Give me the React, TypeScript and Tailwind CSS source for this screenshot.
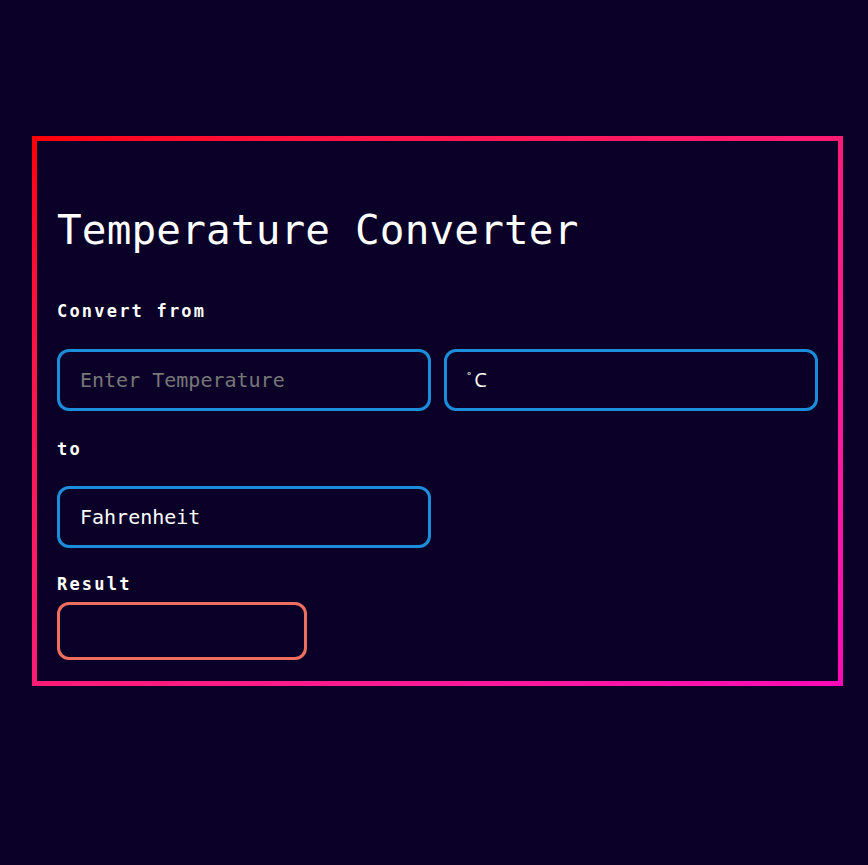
export default function App() {
  const box = "flex h-[62px] items-center rounded-[12px] border-[3px] border-[#1b8ddb] px-[20px] text-[20px]";
  const label = "block text-[17px] font-bold leading-none tracking-[2.2px]";

  return (
    <div className="min-h-screen bg-[#0b0128] pl-[32px] pt-[136px] font-['DejaVu_Sans_Mono',monospace] text-white">
      <div className="w-[811px] bg-linear-to-br from-[#ff0000] to-[#ff08b8] p-[5px]">
        <div className="bg-[#0b0128] px-[20px] pb-[21px] pt-[69px]">
          <h1 className="text-[41px] leading-none tracking-[0.15px]">Temperature Converter</h1>

          <label className={`mt-[52px] ${label}`}>Convert from</label>
          <div className="mt-[29px] grid grid-cols-2 gap-[13px]">
            <input
              type="text"
              placeholder="Enter Temperature"
              className="h-[62px] rounded-[12px] border-[3px] border-[#1b8ddb] bg-transparent px-[20px] text-[20px] text-white outline-none placeholder:text-[#777777]"
            />
            <div className={`${box} font-['Open_Sans',sans-serif]`}>
              <span className="mr-[3px] -translate-y-[2px] text-[14px]">˚</span>C
            </div>
          </div>

          <label className={`mt-[30px] ${label}`}>to</label>
          <div className="mt-[28px] grid grid-cols-2 gap-[13px]">
            <div className={box}>Fahrenheit</div>
          </div>

          <label className={`mt-[28px] ${label}`}>Result</label>
          <div className="mt-[9px] h-[58px] w-[250px] rounded-[12px] border-[3px] border-[#ef6f5f]" />
        </div>
      </div>
    </div>
  );
}
